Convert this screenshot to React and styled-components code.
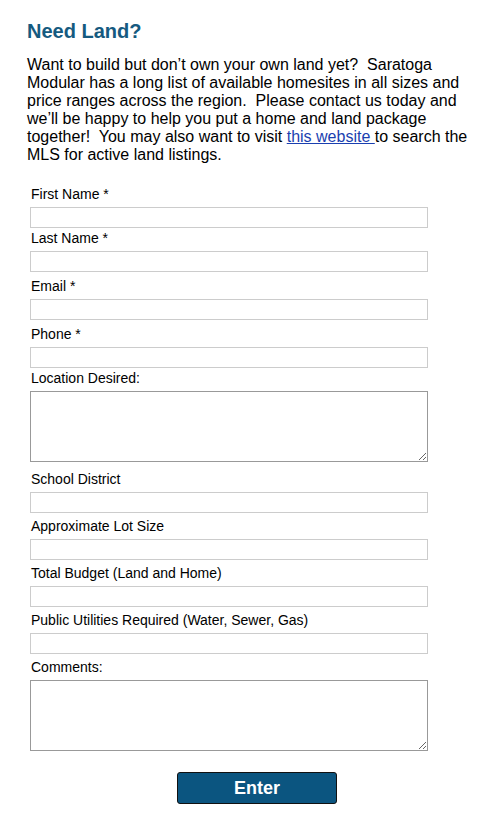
import React from "react";
import styled, { createGlobalStyle } from "styled-components";

// after = space below the control, before the next label
const fields = [
  { id: "firstName", label: "First Name *", after: 2 },
  { id: "lastName", label: "Last Name *", after: 6 },
  { id: "email", label: "Email *", after: 6 },
  { id: "phone", label: "Phone *", after: 2 },
  { id: "location", label: "Location Desired:", multi: true, after: 9 },
  { id: "school", label: "School District", after: 5 },
  { id: "lotSize", label: "Approximate Lot Size", after: 5 },
  { id: "budget", label: "Total Budget (Land and Home)", after: 5 },
  { id: "utilities", label: "Public Utilities Required (Water, Sewer, Gas)", after: 5 },
  { id: "comments", label: "Comments:", multi: true, after: 0 },
];

export default function App() {
  return (
    <>
      <GlobalStyle />
      <Page>
        <Title>Need Land?</Title>
        <Intro>
          Want to build but don’t own your own land yet?&nbsp; Saratoga
          Modular has a long list of available homesites in all sizes and
          price ranges across the region.&nbsp; Please contact us today and
          we’ll be happy to help you put a home and land package
          together!&nbsp; You may also want to visit{" "}
          <Link href="#">this website </Link>to search the MLS for active land
          listings.
        </Intro>
        <Form onSubmit={(e) => e.preventDefault()}>
          {fields.map((f) => (
            <Field key={f.id} after={f.after}>
              <Label htmlFor={f.id}>{f.label}</Label>
              {f.multi ? <TextArea id={f.id} /> : <Input id={f.id} type="text" />}
            </Field>
          ))}
          <SubmitRow>
            <SubmitBtn type="submit">Enter</SubmitBtn>
          </SubmitRow>
        </Form>
      </Page>
    </>
  );
}

const GlobalStyle = createGlobalStyle`
  body {
    margin: 0;
    background: #ffffff;
    font-family: "Liberation Sans", Arial, sans-serif;
    color: #000000;
  }
`;

const Page = styled.div`
  padding: 19px 12px 0 27px;
`;

const Title = styled.h1`
  margin: 0 0 13px;
  font: bold 20px/24px "Liberation Sans", Arial, sans-serif;
  color: #155a80;
`;

const Intro = styled.p`
  margin: 0 0 22px;
  font: 16px/18px "Liberation Sans", Arial, sans-serif;
  color: #000000;
`;

const Link = styled.a`
  color: #1a3fb0;
  text-decoration: underline;
`;

const Form = styled.form`
  display: flex;
  flex-direction: column;
  padding-left: 3px;
  width: 398px;
`;

const Field = styled.div`
  display: flex;
  flex-direction: column;
  margin-bottom: ${(p) => p.after}px;
`;

const Label = styled.label`
  padding-left: 1px;
  margin-bottom: 4px;
  font: 14px/17px "Liberation Sans", Arial, sans-serif;
  color: #000000;
`;

const Input = styled.input`
  box-sizing: border-box;
  width: 398px;
  height: 21px;
  margin: 0;
  padding: 1px 3px;
  border: 1px solid #cccccc;
  background: #ffffff;
  font: 13px "Liberation Sans", Arial, sans-serif;
  outline: none;
`;

const TextArea = styled.textarea`
  display: block;
  box-sizing: border-box;
  width: 398px;
  height: 71px;
  margin: 0;
  padding: 2px;
  border: 1px solid #999999;
  background: #ffffff;
  font: 13px "Liberation Sans", Arial, sans-serif;
  outline: none;
  resize: vertical;
`;

const SubmitRow = styled.div`
  display: flex;
  padding: 21px 0 0 147px;
`;

const SubmitBtn = styled.button`
  width: 160px;
  height: 32px;
  padding: 0;
  border: 1px solid #111111;
  border-radius: 3px;
  background: #0b5580;
  color: #ffffff;
  font: bold 18px/30px "Liberation Sans", Arial, sans-serif;
  cursor: pointer;
`;
